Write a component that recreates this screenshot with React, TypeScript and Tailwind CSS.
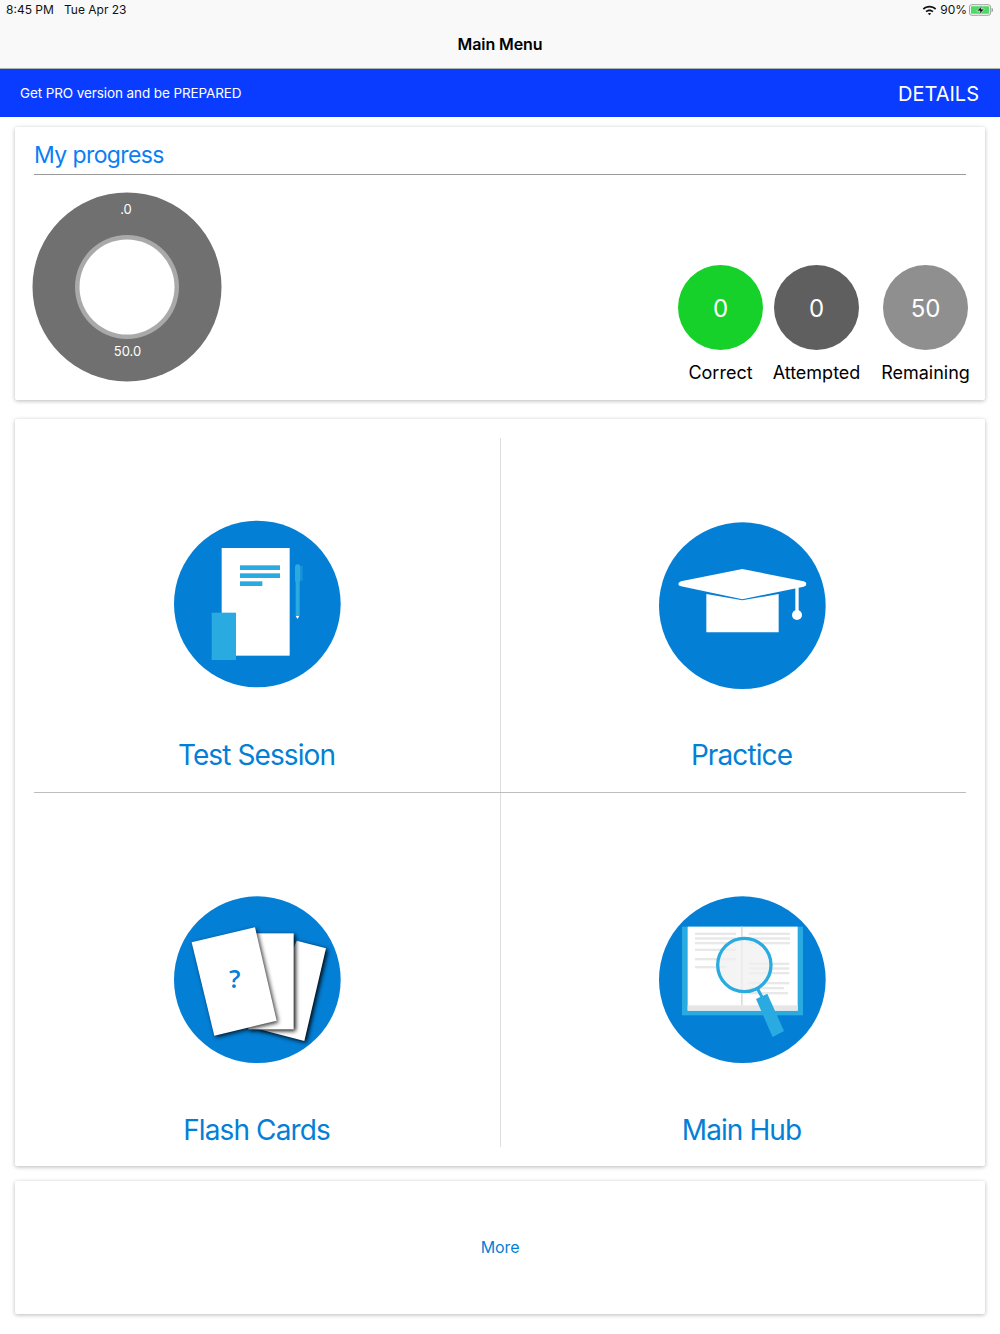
const LIGHT = "#29abe2";
const BLUE = "#047fd6";

const TestIcon = () => (
  <svg viewBox="0 0 555 555" className="h-[185px] w-[185px]">
    <circle cx="277" cy="282" r="250" fill={BLUE} />
    <rect x="170" y="114" width="204" height="323" fill="#fff" />
    <rect x="225" y="166" width="120" height="14" fill={LIGHT} />
    <rect x="225" y="190" width="120" height="14" fill={LIGHT} />
    <rect x="225" y="214" width="67" height="14" fill={LIGHT} />
    <rect x="140" y="308" width="73" height="142" fill={LIGHT} />
    <rect x="406" y="168" width="7" height="44" fill="#1b8fd4" />
    <path d="M390 172a8 9 0 0 1 16 0v42h-2v104h-12V214h-2z" fill={LIGHT} />
    <path d="M392 318h11l-5.500 9z" fill="#fff" />
  </svg>
);

const PracticeIcon = () => (
  <svg viewBox="0 0 555 555" className="h-[185px] w-[185px]">
    <circle cx="277" cy="287" r="250" fill={BLUE} />
    <path d="M169 252l108 19 109-19v115H169z" fill="#fff" />
    <path
      d="M277 177l184 37q8 2 8 8t-8 8l-184 38-184-39q-8-2-8-7t8-8z"
      fill="#fff"
    />
    <rect x="436" y="230" width="10" height="85" fill="#fff" />
    <circle cx="441" cy="315" r="15" fill="#fff" />
  </svg>
);

const CardsIcon = () => (
  <svg viewBox="0 0 555 555" className="h-[185px] w-[185px]">
    <circle cx="277" cy="284" r="250" fill={BLUE} />
    <g className="drop-shadow-[6px_5px_6px_rgba(0,0,0,0.95)]">
      <path d="M395 167l88 23-65 278-138-36z" fill="#fff" />
    </g>
    <g className="drop-shadow-[6px_5px_6px_rgba(0,0,0,0.95)]">
      <rect x="250" y="145" width="136" height="288" fill="#fff" />
    </g>
    <g className="drop-shadow-[5px_5px_6px_rgba(0,0,0,0.8)]">
      <path d="M80 172l190-45 65 280-187 45z" fill="#fff" />
    </g>
    <text
      x="209"
      y="309"
      textAnchor="middle"
      fill={BLUE}
      fontSize="76"
      fontWeight="600"
      fontFamily="'Open Sans', sans-serif"
    >
      ?
    </text>
  </svg>
);

const HubIcon = () => (
  <svg viewBox="0 0 555 555" className="h-[185px] w-[185px]">
    <circle cx="277" cy="284" r="250" fill={BLUE} />
    <rect x="96" y="125" width="363" height="266" fill={LIGHT} />
    <rect x="113" y="125" width="330" height="252" fill="#fff" />
    <rect x="113" y="361" width="330" height="16" fill="#e6e6e6" />
    <rect x="273" y="125" width="5" height="236" fill="#dcdcdc" />
    <g fill="#e8e8e8">
      <rect x="135" y="143" width="123" height="7" />
      <rect x="135" y="157" width="123" height="7" />
      <rect x="135" y="171" width="123" height="7" />
      <rect x="135" y="191" width="123" height="7" />
      <rect x="135" y="219" width="123" height="7" />
      <rect x="135" y="243" width="92" height="7" />
      <rect x="296" y="143" width="124" height="7" />
      <rect x="296" y="157" width="124" height="7" />
      <rect x="296" y="171" width="124" height="7" />
      <rect x="296" y="233" width="122" height="7" />
      <rect x="296" y="247" width="122" height="7" />
      <rect x="296" y="261" width="122" height="7" />
      <rect x="296" y="291" width="122" height="7" />
      <rect x="296" y="306" width="106" height="7" />
      <rect x="296" y="321" width="118" height="7" />
    </g>
    <circle cx="283" cy="240" r="80" fill="#f0f0f0" fillOpacity="0.75" stroke={LIGHT} strokeWidth="10" />
    <path d="M319 314l8-4 13 24-8 4z" fill={LIGHT} />
    <path d="M318 342l34-16 50 112-34 18z" fill={LIGHT} />
  </svg>
);

const Stat = ({ value, label, color }: { value: string; label: string; color: string }) => (
  <div className="flex w-[85px] flex-col items-center">
    <div
      className={`flex h-[85px] w-[85px] items-center justify-center rounded-full pt-[2px] text-[24px] text-white ${color}`}
    >
      {value}
    </div>
    <span className="mt-[10px] whitespace-nowrap text-[18px] leading-[26px] text-black">{label}</span>
  </div>
);

const CARD = "rounded-[2px] bg-white shadow-[0_1px_4px_rgba(0,0,0,0.28)]";
const LABEL = "mr-[2px] text-[28px] leading-[34px] tracking-[-0.9px] text-[#047fd6]";

export default function App() {
  return (
    <div
      className="h-[1334px] w-[1000px] overflow-hidden bg-white"
      style={{ fontFamily: "Inter, 'Liberation Sans', sans-serif" }}
    >
      <header className="h-[69px] border-b border-[#b2b2b2] bg-[#f9f9f9] px-[6px]">
        <div className="flex h-[20px] items-center justify-between text-[12px] text-[#111]">
          <span className="whitespace-pre">8:45 PM   Tue Apr 23</span>
          <div className="flex items-center">
            <svg viewBox="0 0 16 12" className="mr-[3px] h-[12px] w-[15px]" fill="#111">
              <path d="M8 1.500c2.700 0 5.200 1 7.200 2.900l-1.300 1.400C12.300 4.300 10.200 3.400 8 3.400s-4.300.9-5.900 2.400L.8 4.400C2.800 2.500 5.300 1.500 8 1.500z" />
              <path d="M8 5.400c1.600 0 3.100.6 4.300 1.700L11 8.500c-.8-.8-1.900-1.200-3-1.200s-2.200.4-3 1.200L3.700 7.100C4.900 6 6.400 5.400 8 5.400z" />
              <path d="M8 9.100c.7 0 1.300.3 1.800.7L8 11.700 6.200 9.800c.5-.4 1.100-.7 1.800-.7z" />
            </svg>
            <span className="mr-[2px]">90%</span>
            <svg viewBox="0 0 26 12" className="h-[12px] w-[25px]">
              <rect x="0.500" y="0.500" width="22" height="11" rx="2.500" fill="none" stroke="#9a9a9a" />
              <rect x="2" y="2" width="19" height="8" rx="1" fill="#4cd964" />
              <path d="M23.500 4v4c1 0 1.500-.8 1.500-2s-.5-2-1.500-2z" fill="#9a9a9a" />
              <path d="M14.500 0.500L8 7h3.500l-1.500 4.500L16 5h-3.500z" fill="#111" stroke="#f4f4f4" strokeWidth="0.700" />
            </svg>
          </div>
        </div>
        <h1 className="mt-[12px] text-center text-[16px] leading-[24px] font-semibold tracking-[-0.1px] text-black">
          Main Menu
        </h1>
      </header>

      <div className="flex h-[48px] items-center justify-between bg-[#0a3cff] px-[20px] text-white">
        <span className="text-[13.500px] tracking-[-0.1px]">Get PRO version and be PREPARED</span>
        <span className="mr-[1px] pt-[1px] text-[20px]">DETAILS</span>
      </div>

      <section className={`mx-[15px] mt-[10px] h-[273px] px-[19px] ${CARD}`}>
        <h2 className="h-[48px] border-b border-[#9c9c9c] pt-[13px] text-[23px] leading-[30px] tracking-[-0.6px] text-[#0a7ff5]">
          My progress
        </h2>
        <div className="flex items-start justify-between">
          <svg viewBox="0 0 190 190" className="ml-[-2px] mt-[17px] h-[190px] w-[190px]">
            <circle cx="95" cy="95" r="94.500" fill="#707070" />
            <circle cx="95" cy="95" r="52" fill="#a9a9a9" />
            <circle cx="95" cy="95" r="47.500" fill="#fff" />
            <text x="94" y="22" textAnchor="middle" fill="#fff" fontSize="13">
              .0
            </text>
            <text x="95.500" y="164" textAnchor="middle" fill="#fff" fontSize="13">
              50.0
            </text>
          </svg>
          <div className="mr-[-2px] mt-[90px] flex">
            <Stat value="0" label="Correct" color="bg-[#17d12b]" />
            <div className="ml-[11px]">
              <Stat value="0" label="Attempted" color="bg-[#5f5f5f]" />
            </div>
            <div className="ml-[24px]">
              <Stat value="50" label="Remaining" color="bg-[#8f8f8f]" />
            </div>
          </div>
        </div>
      </section>

      <section className={`mx-[15px] mt-[19px] h-[747px] py-[19px] ${CARD}`}>
        <div className="grid h-[354px] grid-cols-2">
          <div className="flex flex-col items-center pt-[72px]">
            <TestIcon />
            <span className={`mt-[43px] ${LABEL}`}>Test Session</span>
          </div>
          <div className="flex flex-col items-center border-l border-[#dedede] pr-[1px] pt-[72px]">
            <PracticeIcon />
            <span className={`mt-[43px] ${LABEL}`}>Practice</span>
          </div>
        </div>
        <div className="mx-[19px] h-px bg-[#bdbdbd]" />
        <div className="grid h-[354px] grid-cols-2">
          <div className="flex flex-col items-center pt-[92px]">
            <CardsIcon />
            <span className={`mt-[43px] ${LABEL}`}>Flash Cards</span>
          </div>
          <div className="flex flex-col items-center border-l border-[#dedede] pr-[1px] pt-[92px]">
            <HubIcon />
            <span className={`mt-[43px] ${LABEL}`}>Main Hub</span>
          </div>
        </div>
      </section>

      <section className={`mx-[15px] mt-[15px] flex h-[133px] items-center justify-center ${CARD}`}>
        <span className="pb-[2px] text-[16px] tracking-[-0.1px] text-[#047fd6]">More</span>
      </section>
    </div>
  );
}
